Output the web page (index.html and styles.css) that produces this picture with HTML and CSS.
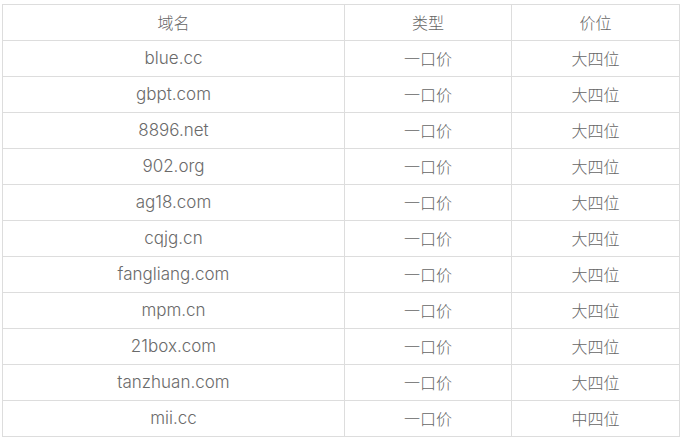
FILE: index.html
```html
<!DOCTYPE html>
<html lang="zh">
<head>
<meta charset="utf-8">
<link rel="stylesheet" href="styles.css">
</head>
<body>
<table class="domains">
  <colgroup><col class="c1"><col class="c2"><col class="c3"></colgroup>
  <thead>
    <tr><th>域名</th><th>类型</th><th>价位</th></tr>
  </thead>
  <tbody>
    <tr><td class="name">blue.cc</td><td>一口价</td><td>大四位</td></tr>
    <tr><td class="name">gbpt.com</td><td>一口价</td><td>大四位</td></tr>
    <tr><td class="name">8896.net</td><td>一口价</td><td>大四位</td></tr>
    <tr><td class="name">902.org</td><td>一口价</td><td>大四位</td></tr>
    <tr><td class="name">ag18.com</td><td>一口价</td><td>大四位</td></tr>
    <tr><td class="name">cqjg.cn</td><td>一口价</td><td>大四位</td></tr>
    <tr><td class="name">fangliang.com</td><td>一口价</td><td>大四位</td></tr>
    <tr><td class="name">mpm.cn</td><td>一口价</td><td>大四位</td></tr>
    <tr><td class="name">21box.com</td><td>一口价</td><td>大四位</td></tr>
    <tr><td class="name">tanzhuan.com</td><td>一口价</td><td>大四位</td></tr>
    <tr><td class="name">mii.cc</td><td>一口价</td><td>中四位</td></tr>
  </tbody>
</table>
</body>
</html>
```
FILE: styles.css
```css
html, body {
  margin: 0;
  background: #fff;
}
body {
  padding: 4px 0 0 2px;
  font-family: "Noto Sans CJK SC", sans-serif;
  font-size: 16px;
  color: #666;
}
.domains {
  border-collapse: collapse;
  width: 677px;
  table-layout: fixed;
}
.domains .c1 { width: 342px; }
.domains .c2 { width: 167px; }
.domains .c3 { width: 168px; }
.domains th,
.domains td {
  border: 1px solid #ddd;
  height: 33px;
  padding: 0 0 2px;
  text-align: center;
  vertical-align: middle;
  font-weight: 300;
  line-height: 20px;
}
.domains td.name {
  font-family: "Inter", "Noto Sans CJK SC", sans-serif;
  font-size: 17px;
  font-weight: 350;
  color: #6a6a6a;
}
```
